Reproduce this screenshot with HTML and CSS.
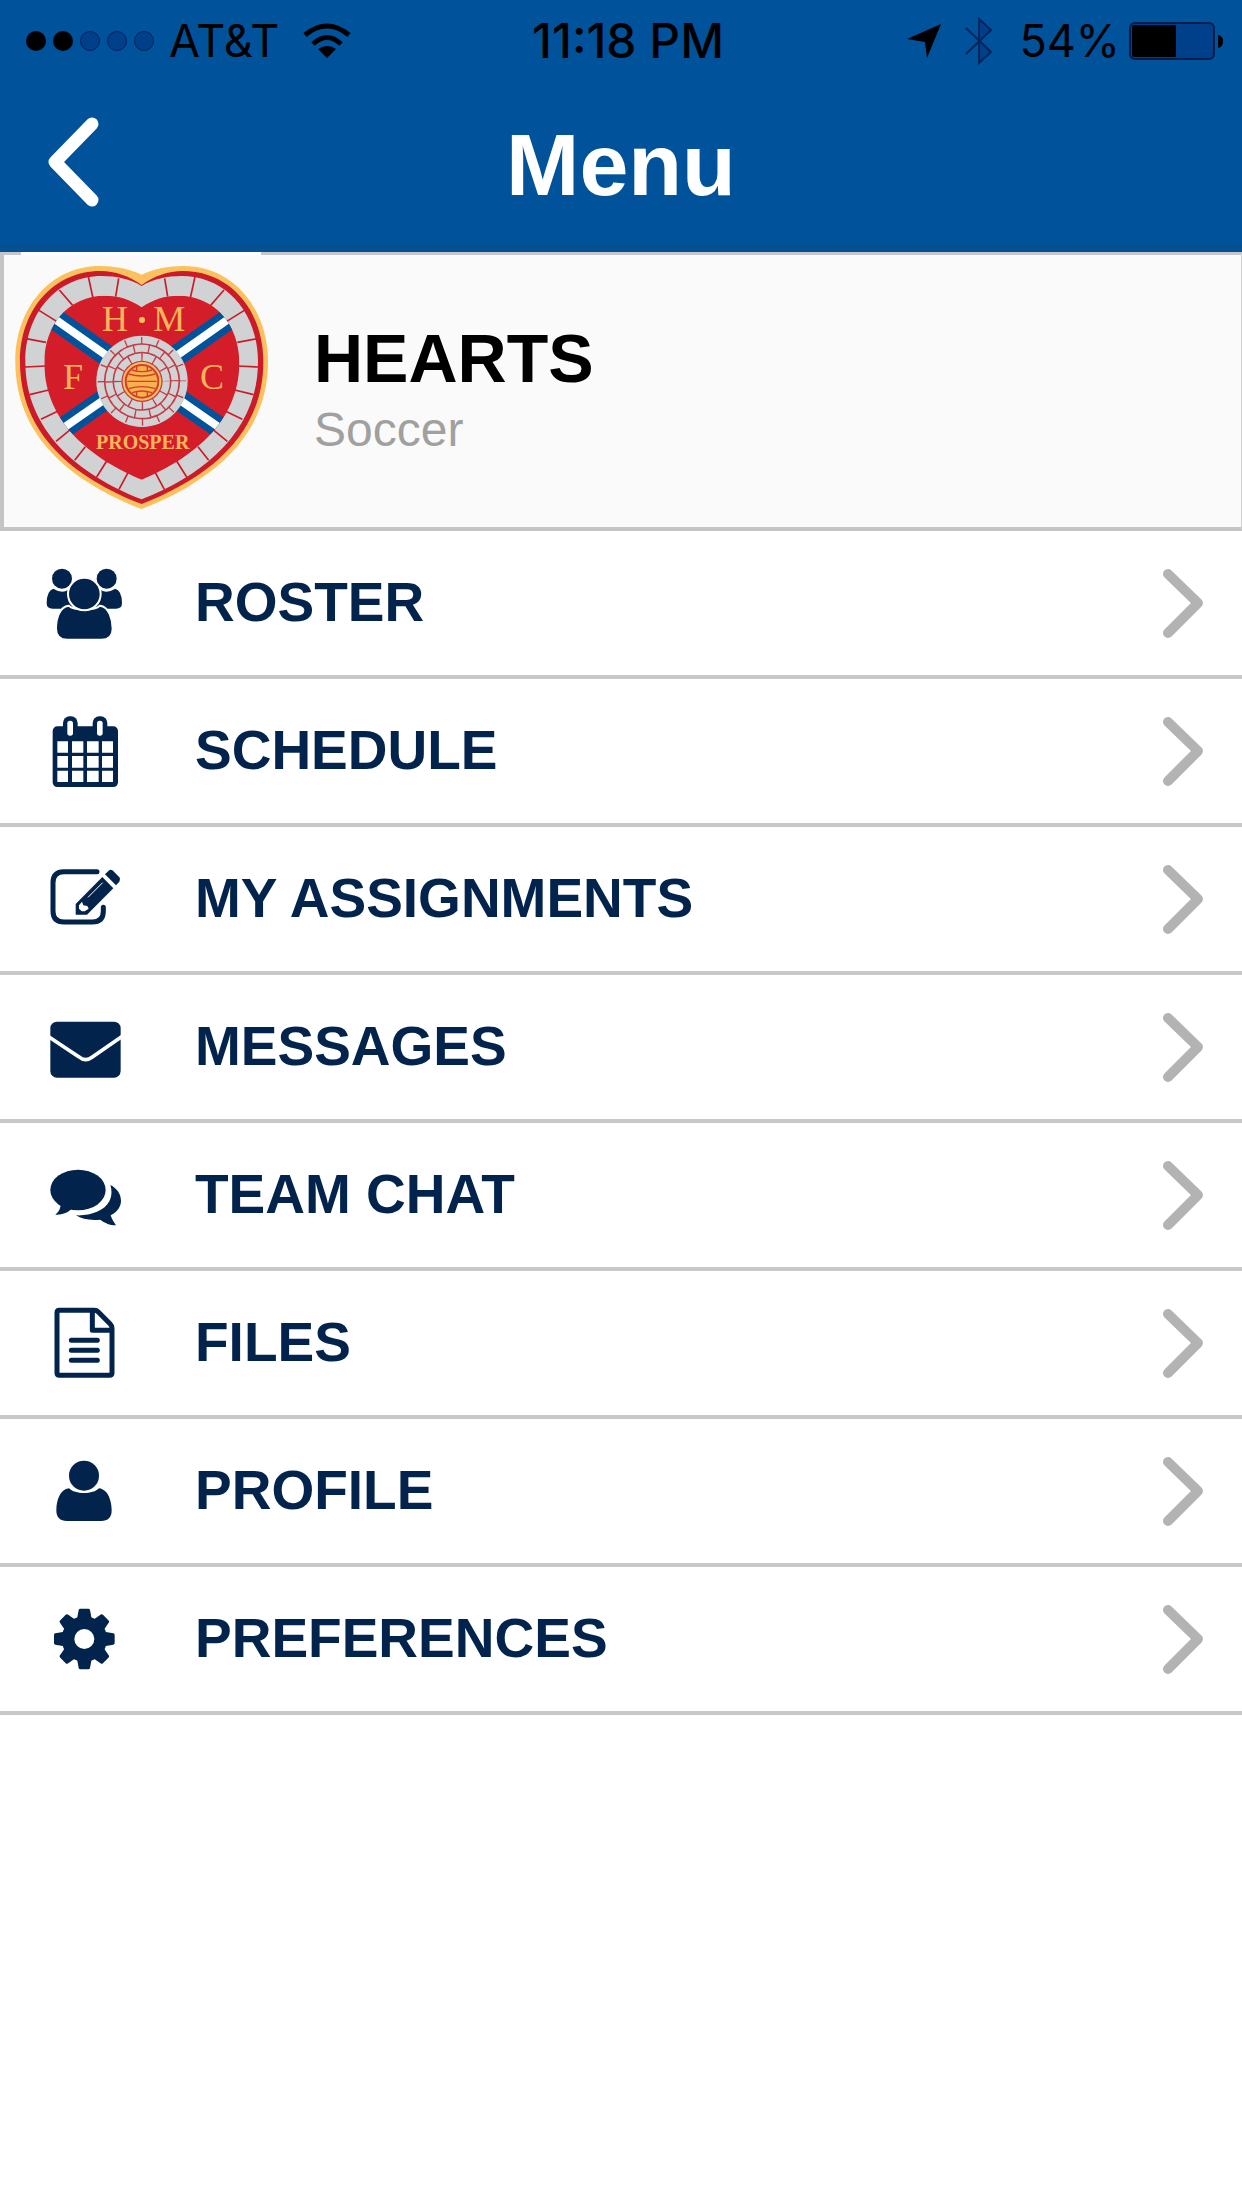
FILE: index.html
```html
<!DOCTYPE html>
<html lang="en">

<head>
  <meta charset="UTF-8">
  <meta name="viewport" content="width=device-width, initial-scale=1">
  <title>Menu</title>
  <link rel="stylesheet" href="styles.css">
</head>

<body>
  <header class="header">
    <div class="status">
      <div class="status__left">
        <svg class="status__signal" viewBox="0 0 130 22">
          <circle cx="11" cy="11" r="10" />
          <circle cx="38" cy="11" r="10" />
          <g fill="#003f8a" stroke="#00215a">
            <circle cx="65" cy="11" r="9.5" />
            <circle cx="92" cy="11" r="9.5" />
            <circle cx="119" cy="11" r="9.5" />
          </g>
        </svg>
        <span class="status__carrier">AT&amp;T</span>
        <svg class="status__wifi" viewBox="0 0 48 36">
          <g fill="none" stroke="#000" stroke-width="5">
            <path d="M2 12 Q24 -6 46 12" />
            <path d="M10 21 Q24 8 38 21" />
          </g>
          <path d="M15 26 Q24 20 33 26 L24 35 Z" />
        </svg>
      </div>
      <span class="status__time">11:18 PM</span>
      <div class="status__right">
        <svg class="status__location" viewBox="0 0 34 34">
          <path d="M34 0 L20 34 L18 18 L0 15 Z" />
        </svg>
        <svg class="status__bluetooth" viewBox="0 0 28 48">
          <path d="M14 2 L26 13 L14 23 L26 35 L14 46 Z" fill="#003f8a" />
          <path d="M1 11 L26 35 L14 46 V2 L26 13 L1 37" fill="none" stroke="#00255c" stroke-width="2" />
        </svg>
        <span class="status__percent">54%</span>
        <svg class="status__battery" viewBox="0 0 94 38">
          <rect x="1" y="1" width="84" height="36" rx="5" fill="#003f8a" stroke="#001e4c" stroke-width="2" />
          <path d="M5 3 H47 V35 H5 Q3 35 3 33 V5 Q3 3 5 3 Z" />
          <path d="M89 13 Q94 14 94 19 Q94 25 89 26 Z" />
        </svg>
      </div>
    </div>
    <div class="bar">
      <button class="bar__back" type="button" aria-label="Back">
        <svg viewBox="0 0 54 92">
          <path d="M46 8 L9 46 L46 84" />
        </svg>
      </button>
      <h1 class="bar__title">Menu</h1>
    </div>
  </header>

  <main>
    <section class="team">
      <svg class="team__crest" viewBox="42 75 765 735" role="img" aria-label="Hearts crest">
        <defs>
          <clipPath id="shield">
            <path d="M425 202 C390 178 355 167 316 167 C205 167 133 255 133 368 C133 550 280 658 425 719 C570 658 718 550 718 368 C718 255 645 167 534 167 C495 167 460 178 425 202 Z" />
          </clipPath>
        </defs>
        <path fill="#fcc15f" d="M425 104 C385 86 345 78 300 78 C150 78 46 205 46 365 C46 590 215 725 425 807 C635 725 804 590 804 365 C804 205 700 78 550 78 C505 78 465 86 425 104 Z" />
        <path fill="#cb1a28" d="M425 135 C388 108 345 93 302 93 C158 93 60 212 60 365 C60 582 220 712 425 792 C630 712 790 582 790 365 C790 212 692 93 548 93 C505 93 462 108 425 135 Z" />
        <path fill="#d0d2d3" d="M425 138 C392 117 348 108 306 108 C168 108 76 222 76 365 C76 570 232 702 425 778 C618 702 774 570 774 365 C774 222 682 108 544 108 C502 108 458 117 425 138 Z" />
        <path id="joints" fill="none" stroke="#cb1a28" stroke-width="5" d="M356 115 L347 170 M265 110 L279 174 M178 150 L218 196 M117 211 L170 244 M78 296 L138 307 M75 381 L138 378 M89 464 L146 450 M123 538 L176 512 M168 604 L212 568 M224 661 L256 620 M290 711 L322 660 M357 748 L384 698" />
        <use href="#joints" transform="translate(850 0) scale(-1 1)" />
        <g clip-path="url(#shield)">
          <rect x="120" y="150" width="610" height="580" fill="#d31e29" />
          <g stroke="#00529b" stroke-width="64">
            <path d="M160 234 L330 354 M690 234 L520 354 M190 564 L340 460 M660 564 L510 460" />
          </g>
          <g stroke="#fff" stroke-width="24">
            <path d="M160 234 L330 354 M690 234 L520 354 M190 564 L340 460 M660 564 L510 460" />
          </g>
        </g>
        <circle cx="426" cy="424" r="137" fill="#d0d2d3" />
        <circle cx="426" cy="424" r="133" fill="#c33b46" />
        <g fill="none" stroke="#d0d2d3">
          <circle cx="426" cy="424" r="125" stroke-width="21" stroke-dasharray="45.1 4" />
          <circle cx="426" cy="424" r="99" stroke-width="21" stroke-dasharray="40.4 4" />
          <circle cx="426" cy="424" r="73" stroke-width="22" stroke-dasharray="34.2 4" />
        </g>
        <circle cx="426" cy="424" r="58" fill="#fcc15f" />
        <circle cx="426" cy="424" r="49" fill="#f9b04e" stroke="#d0402b" stroke-width="6" />
        <path fill="none" stroke="#d0402b" stroke-width="4" d="M386 402 Q426 414 466 402 M382 424 H470 M386 446 Q426 434 466 446 M396 390 Q426 400 456 390 M396 458 Q426 448 456 458 M410 378 V392 M442 378 V392 M410 456 V470 M442 456 V470" />
        <circle cx="426" cy="240" r="9" fill="#fcc15f" />
        <g class="team__letters">
          <text x="345" y="273">H</text>
          <text x="508" y="273">M</text>
          <text x="219" y="448">F</text>
          <text x="636" y="448">C</text>
          <text class="team__motto" x="428" y="627">PROSPER</text>
        </g>
      </svg>
      <div class="team__infos">
        <h2>HEARTS</h2>
        <p>Soccer</p>
      </div>
    </section>

    <nav>
      <ul class="menu">
        <li>
          <a class="menu__link" href="#roster">
            <svg class="menu__icon" viewBox="138 102 234 234">
              <circle cx="186" cy="146" r="30" />
              <circle cx="320" cy="146" r="30" />
              <path d="M160 176 Q186 192 204 180 L220 236 H158 Q140 236 140 220 Q140 182 160 176 Z" />
              <path d="M346 176 Q320 192 302 180 L286 236 H348 Q366 236 366 220 Q366 182 346 176 Z" />
              <g stroke="#fff" stroke-width="6">
                <path d="M206 227 C222 243 284 243 300 227 C328 230 338 270 338 296 Q338 329 304 329 H202 Q168 329 168 296 C168 266 178 230 206 227 Z" />
                <circle cx="253" cy="192" r="49" />
              </g>
            </svg>
            <span class="menu__label">ROSTER</span>
            <svg class="menu__arrow" viewBox="0 0 44 72"><path d="M7 7 L37 36 L7 66" /></svg>
          </a>
        </li>
        <li>
          <a class="menu__link" href="#schedule">
            <svg class="menu__icon" viewBox="138 546 234 234">
              <rect x="158" y="589" width="196" height="182" rx="14" />
              <rect x="189" y="559" width="44" height="70" rx="20" />
              <rect x="278" y="559" width="44" height="70" rx="20" />
              <g fill="#fff">
                <rect x="202" y="572" width="17" height="45" rx="8" />
                <rect x="291" y="572" width="17" height="45" rx="8" />
                <path d="M172 634h32v34h-32z M216 634h34v34h-34z M261 634h35v34h-35z M306 634h33v34h-33z" />
                <path d="M172 678h32v35h-32z M216 678h34v35h-34z M261 678h35v35h-35z M306 678h33v35h-33z" />
                <path d="M172 722h32v34h-32z M216 722h34v34h-34z M261 722h35v34h-35z M306 722h33v34h-33z" />
              </g>
            </svg>
            <span class="menu__label">SCHEDULE</span>
            <svg class="menu__arrow" viewBox="0 0 44 72"><path d="M7 7 L37 36 L7 66" /></svg>
          </a>
        </li>
        <li>
          <a class="menu__link" href="#assignments">
            <svg class="menu__icon" viewBox="138 120 234 234">
              <path fill="none" stroke="#02234c" stroke-width="15" stroke-linecap="round" d="M291 155 H192 Q159 155 159 188 V273 Q159 306 192 306 H277 Q310 306 310 273 V262" />
              <path d="M227 252 L307 171 L340 205 L261 284 H227 Z" />
              <path d="M315 163 L326 152 Q332 147 339 152 L358 172 Q363 178 358 185 L348 196 Z" />
              <path fill="none" stroke="#fff" stroke-width="3" d="M264 232 L308 188" />
              <path fill="#fff" d="M246 245 L250 256 L262 258 L266 266 L254 274 H245 L237 266 V256 Z" />
            </svg>
            <span class="menu__label">MY ASSIGNMENTS</span>
            <svg class="menu__arrow" viewBox="0 0 44 72"><path d="M7 7 L37 36 L7 66" /></svg>
          </a>
        </li>
        <li>
          <a class="menu__link" href="#messages">
            <svg class="menu__icon" viewBox="138 564 234 234">
              <rect x="151" y="605" width="211" height="168" rx="20" />
              <path fill="none" stroke="#fff" stroke-width="11" d="M146 650 L236 710 Q256 727 276 712 L368 648" />
            </svg>
            <span class="menu__label">MESSAGES</span>
            <svg class="menu__arrow" viewBox="0 0 44 72"><path d="M7 7 L37 36 L7 66" /></svg>
          </a>
        </li>
        <li>
          <a class="menu__link" href="#chat">
            <svg class="menu__icon" viewBox="138 108 234 234">
              <ellipse cx="234" cy="210" rx="83" ry="61" />
              <path d="M182 252 Q182 272 166 284 Q194 286 214 268 Z" />
              <path d="M331 195 C351 205 363 222 363 242 C363 260 352 275 332 286 C336 299 342 307 348 316 C328 316 314 308 300 299 C270 302 245 297 228 286 C270 288 312 274 328 244 C336 228 336 210 331 195 Z" />
            </svg>
            <span class="menu__label">TEAM CHAT</span>
            <svg class="menu__arrow" viewBox="0 0 44 72"><path d="M7 7 L37 36 L7 66" /></svg>
          </a>
        </li>
        <li>
          <a class="menu__link" href="#files">
            <svg class="menu__icon" viewBox="138 552 234 234">
              <g fill="none" stroke="#02234c" stroke-width="15" stroke-linejoin="round">
                <path d="M178 571 H283 Q290 571 295 576 L330 611 Q336 617 336 624 V759 Q336 766 329 766 H178 Q171 766 171 759 V578 Q171 571 178 571 Z" />
                <path d="M277 571 V631 H336" />
                <path stroke-linecap="round" d="M214 661 H292 M214 691 H292 M214 721 H292" />
              </g>
            </svg>
            <span class="menu__label">FILES</span>
            <svg class="menu__arrow" viewBox="0 0 44 72"><path d="M7 7 L37 36 L7 66" /></svg>
          </a>
        </li>
        <li>
          <a class="menu__link" href="#profile">
            <svg class="menu__icon" viewBox="138 126 234 234">
              <circle cx="252" cy="197" r="45" />
              <path d="M207 235 C224 254 280 254 297 235 C325 238 335 275 335 301 Q335 333 303 333 H201 Q169 333 169 301 C169 272 180 238 207 235 Z" />
            </svg>
            <span class="menu__label">PROFILE</span>
            <svg class="menu__arrow" viewBox="0 0 44 72"><path d="M7 7 L37 36 L7 66" /></svg>
          </a>
        </li>
        <li>
          <a class="menu__link" href="#preferences">
            <svg class="menu__icon" viewBox="138 570 234 234">
              <defs>
                <path id="teeth" d="M231 627 L236 600 Q237 596 241 596 H265 Q269 596 270 600 L275 627 V747 L270 774 Q269 778 265 778 H241 Q237 778 236 774 L231 747 Z" />
              </defs>
              <use href="#teeth" />
              <use href="#teeth" transform="rotate(45 253 687)" />
              <use href="#teeth" transform="rotate(90 253 687)" />
              <use href="#teeth" transform="rotate(135 253 687)" />
              <circle cx="253" cy="687" r="68" />
              <circle cx="253" cy="687" r="30" fill="#fff" />
            </svg>
            <span class="menu__label">PREFERENCES</span>
            <svg class="menu__arrow" viewBox="0 0 44 72"><path d="M7 7 L37 36 L7 66" /></svg>
          </a>
        </li>
      </ul>
    </nav>
  </main>
</body>

</html>
```

FILE: styles.css
```css
* {
  margin: 0;
  padding: 0;
  box-sizing: border-box;
}

body {
  background-color: #fff;
  font-family: "Liberation Sans", Arial, sans-serif;
}

svg {
  display: block;
  flex-shrink: 0;
}

.header {
  background-color: #00529b;
  border-bottom: 9px solid #045092;
}

/* status bar */
.status {
  display: grid;
  grid-template-columns: 1fr auto 1fr;
  align-items: center;
  height: 80px;
  padding: 0 19px 0 25px;
  font-family: Inter, "Liberation Sans", sans-serif;
  font-size: 45px;
  line-height: 82px;
  color: #000;
}

.status__left,
.status__right {
  display: flex;
  align-items: center;
}

.status__right {
  justify-content: flex-end;
}

.status__signal {
  width: 130px;
  height: 22px;
}

.status__carrier {
  margin: 0 24px 0 14px;
}

.status__wifi {
  width: 48px;
  height: 36px;
}

.status__time {
  padding-left: 8px;
  font-size: 48px;
  font-weight: 500;
}

.status__location {
  width: 34px;
  height: 34px;
}

.status__bluetooth {
  width: 28px;
  height: 48px;
  margin: 0 26px 0 24px;
}

.status__battery {
  width: 94px;
  height: 38px;
  margin-left: 9px;
}

/* title bar */
.bar {
  display: grid;
  grid-template-columns: 1fr auto 1fr;
  align-items: center;
  height: 163px;
  padding: 0 46px;
}

.bar__back {
  justify-self: start;
  background: none;
  border: none;
  cursor: pointer;
}

.bar__back svg {
  width: 54px;
  height: 92px;
  fill: none;
  stroke: #fff;
  stroke-width: 13px;
  stroke-linecap: round;
  stroke-linejoin: round;
}

.bar__title {
  padding-top: 6px;
  font-size: 88px;
  line-height: 100px;
  color: #fff;
}

/* team */
.team {
  position: relative;
  display: flex;
  align-items: center;
  gap: 45px;
  padding: 10px 10px 17px;
  background-color: #fafafa;
  border: 4px solid #c4c4c4;
  border-top: 3px solid #c4c8cc;
  border-right: 1px solid #d0d0d0;
}

.team::before {
  content: "";
  position: absolute;
  top: -3px;
  left: 17px;
  width: 240px;
  height: 3px;
  background-color: #fcfcfd;
}

.team__crest {
  width: 255px;
  height: 245px;
}

.team__letters {
  font-family: "Liberation Serif", "Times New Roman", serif;
  font-size: 108px;
  fill: #fcb45c;
  text-anchor: middle;
}

.team__motto {
  font-size: 60px;
  font-weight: bold;
}

.team__infos {
  padding-top: 6px;
}

.team__infos h2 {
  margin-bottom: 6px;
  font-size: 68px;
  line-height: 72px;
  color: #000;
}

.team__infos p {
  font-size: 48px;
  line-height: 60px;
  color: #a0a0a0;
}

/* menu */
.menu {
  list-style: none;
}

.menu__link {
  display: flex;
  align-items: center;
  height: 148px;
  padding: 0 37px 0 46px;
  border-bottom: 4px solid #c8c8ca;
  color: #02234c;
  text-decoration: none;
}

.menu__icon {
  width: 78px;
  height: 78px;
  fill: #02234c;
}

.menu__label {
  flex: 1;
  padding: 0 20px 2px 71px;
  font-size: 55px;
  font-weight: bold;
  line-height: 64px;
}

.menu__arrow {
  width: 44px;
  height: 72px;
  fill: none;
  stroke: #b3b3b3;
  stroke-width: 10px;
  stroke-linecap: round;
  stroke-linejoin: round;
}
```
